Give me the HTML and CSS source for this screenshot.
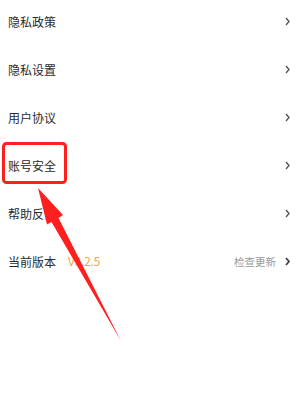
FILE: index.html
```html
<!DOCTYPE html>
<html lang="zh">
<head>
<meta charset="utf-8">
<link rel="stylesheet" href="styles.css">
</head>
<body>
<div class="page">
  <ul class="menu">
    <li class="row"><span class="label">隐私政策</span><span class="right"><svg class="chev" viewBox="0 0 5 9"><polyline points="1,1 4,4.5 1,8"/></svg></span></li>
    <li class="row"><span class="label">隐私设置</span><span class="right"><svg class="chev" viewBox="0 0 5 9"><polyline points="1,1 4,4.5 1,8"/></svg></span></li>
    <li class="row"><span class="label">用户协议</span><span class="right"><svg class="chev" viewBox="0 0 5 9"><polyline points="1,1 4,4.5 1,8"/></svg></span></li>
    <li class="row"><span class="label">账号安全</span><span class="right"><svg class="chev" viewBox="0 0 5 9"><polyline points="1,1 4,4.5 1,8"/></svg></span></li>
    <li class="row"><span class="label">帮助反馈</span><span class="right"><svg class="chev" viewBox="0 0 5 9"><polyline points="1,1 4,4.5 1,8"/></svg></span></li>
    <li class="row"><span class="label">当前版本<span class="version">V3.2.5</span></span><span class="right"><span class="update">检查更新</span><svg class="chev bold" viewBox="0 0 5 9"><polyline points="1,1 4,4.5 1,8"/></svg></span></li>
  </ul>
  <svg class="annot" viewBox="0 0 302 408" width="302" height="408">
    <rect x="3.5" y="143.5" width="62" height="39" rx="3" ry="3" fill="none" stroke="#ff1f1f" stroke-width="3"/>
    <polygon fill="#ff1f1f" points="38,188 63,215 58.5,218 121,341 51.5,222 47,224.5"/>
  </svg>
</div>
</body>
</html>
```
FILE: styles.css
```css
html, body {
  margin: 0;
  padding: 0;
  background: #ffffff;
}
.page {
  position: relative;
  width: 302px;
  height: 408px;
  overflow: hidden;
  font-family: "Noto Sans CJK SC", "Noto Sans", sans-serif;
}
.menu {
  list-style: none;
  margin: -3px 0 0 0;
  padding: 0;
}
.row {
  height: 48px;
  display: flex;
  align-items: center;
  justify-content: space-between;
  padding: 0 12px 0 8px;
}
.label {
  font-size: 12px;
  color: #2a2a2a;
  display: flex;
  align-items: center;
}
.version {
  margin-left: 12px;
  font-size: 11.5px;
  color: #eea43a;
}
.right {
  display: flex;
  align-items: center;
}
.update {
  font-size: 10.5px;
  color: #9a9a9a;
  margin-right: 9px;
}
.chev {
  width: 5px;
  height: 9px;
  fill: none;
  stroke: #555555;
  stroke-width: 1.4;
}
.chev.bold {
  stroke-width: 1.8;
  stroke: #444444;
}
.annot {
  position: absolute;
  left: 0;
  top: 0;
  pointer-events: none;
}
```
